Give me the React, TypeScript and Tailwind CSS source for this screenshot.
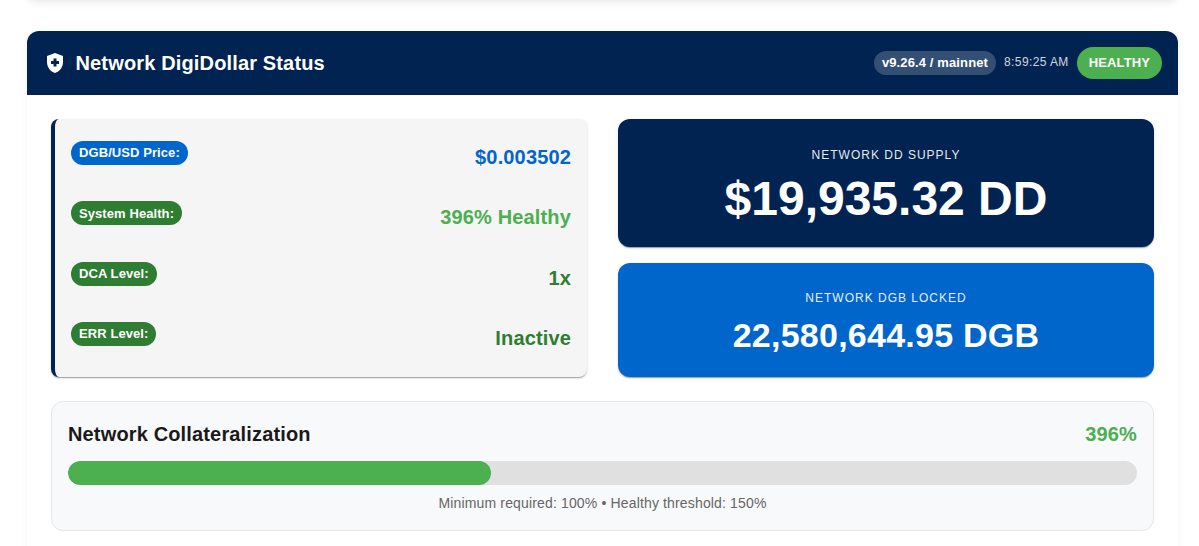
import React from "react";
import clsx from "clsx";

const stats = [
  {
    label: "DGB/USD Price:",
    value: "$0.003502",
    chip: "bg-[#0066cc]",
    text: "text-[#0066cc]",
  },
  {
    label: "System Health:",
    value: "396% Healthy",
    chip: "bg-[#2e7d32]",
    text: "text-[#4caf50]",
  },
  {
    label: "DCA Level:",
    value: "1x",
    chip: "bg-[#2e7d32]",
    text: "text-[#2e7d32]",
  },
  {
    label: "ERR Level:",
    value: "Inactive",
    chip: "bg-[#2e7d32]",
    text: "text-[#2e7d32]",
  },
];

const paperShadow =
  "shadow-[0_2px_1px_-1px_rgba(0,0,0,0.2),0_1px_1px_0_rgba(0,0,0,0.14),0_1px_3px_0_rgba(0,0,0,0.12)]";

const ShieldIcon = () => (
  <svg viewBox="0 0 24 24" className="size-6 fill-current">
    <path d="M10.5 13H8v-3h2.5V7.5h3V10H16v3h-2.5v2.5h-3V13zM12 2 4 5v6.09c0 5.05 3.41 9.76 8 10.91 4.59-1.15 8-5.86 8-10.91V5l-8-3z" />
  </svg>
);

const Header = () => (
  <div className="flex h-16 items-center justify-between bg-[#002352] pr-4 pl-[15.5px] text-white">
    <div className="flex items-center gap-[9px]">
      <ShieldIcon />
      <h2 className="text-xl font-bold tracking-[0.0075em]">
        Network DigiDollar Status
      </h2>
    </div>
    <div className="flex items-center gap-2">
      <span className="flex h-6 items-center rounded-full bg-white/20 px-2 text-[13px] font-bold tracking-[0.12px]">
        v9.26.4 / mainnet
      </span>
      <span className="-mt-0.5 text-xs tracking-[0.03333em] opacity-80">
        8:59:25 AM
      </span>
      <span className="flex h-8 items-center rounded-full bg-[#4caf50] px-3 text-[13px] font-bold tracking-[0.12px]">
        HEALTHY
      </span>
    </div>
  </div>
);

const StatList = () => (
  <div
    className={clsx(
      "flex h-[258px] flex-col overflow-hidden rounded-lg border-l-4 border-[#002352] bg-[#f5f5f5] px-4 pt-[22px]",
      paperShadow
    )}
  >
    {stats.map((stat) => (
      <div
        key={stat.label}
        className="flex h-[60.4px] shrink-0 justify-between"
      >
        <span
          className={clsx(
            "flex h-6 items-center rounded-full px-2 text-[13px] font-bold tracking-[0.08px] text-white",
            stat.chip
          )}
        >
          {stat.label}
        </span>
        <span
          className={clsx(
            "text-xl leading-8 font-bold tracking-[0.0075em]",
            stat.text
          )}
        >
          {stat.value}
        </span>
      </div>
    ))}
  </div>
);

const Totals = () => (
  <div className="flex flex-col gap-4 text-center text-white">
    <div
      className={clsx("h-32 rounded-xl bg-[#002352] pt-[26px]", paperShadow)}
    >
      <p className="text-xs leading-5 tracking-[1px] opacity-90">
        NETWORK DD SUPPLY
      </p>
      <p className="mt-1.5 text-5xl leading-[56px] font-bold">$19,935.32 DD</p>
    </div>
    <div
      className={clsx(
        "h-[114px] rounded-xl bg-[#0066cc] pt-[25px]",
        paperShadow
      )}
    >
      <p className="text-xs leading-5 tracking-[1px] opacity-90">
        NETWORK DGB LOCKED
      </p>
      <p className="mt-1.5 text-[34px] leading-[42px] font-bold tracking-[0.00735em]">
        22,580,644.95 DGB
      </p>
    </div>
  </div>
);

const Collateral = () => (
  <div className="mt-[23.5px] h-[130px] rounded-xl border border-[#e5e7e9] bg-[#f8f9fb] px-4 pt-4">
    <div className="flex justify-between text-xl leading-8 font-bold tracking-[0.0075em]">
      <h3 className="text-[#1a1a1a]">Network Collateralization</h3>
      <span className="text-[#4caf50]">396%</span>
    </div>
    <div className="mt-[11.5px] h-6 overflow-hidden rounded-full bg-[#e0e0e0]">
      <div className="h-full w-[39.6%] rounded-full bg-[#4caf50]" />
    </div>
    <p className="mt-[7.5px] text-center text-sm tracking-[0.01071em] text-[#666666]">
      Minimum required: 100% • Healthy threshold: 150%
    </p>
  </div>
);

const App = () => (
  <div className="h-[546px] overflow-hidden bg-white pr-[21px] pl-[27px] font-['Liberation_Sans',Arial,sans-serif]">
    {/* bottom edge of the preceding card */}
    <div className="-mt-5 h-5 rounded-xl bg-white shadow-[0_2px_8px_rgba(0,0,0,0.1)]" />
    <div className="mt-[31px] h-[600px] overflow-hidden rounded-xl bg-white shadow-[0_2px_8px_rgba(0,0,0,0.05)]">
      <Header />
      <div className="p-6">
        <div className="grid grid-cols-2 gap-[31px]">
          <StatList />
          <Totals />
        </div>
        <Collateral />
      </div>
    </div>
  </div>
);

export default App;
